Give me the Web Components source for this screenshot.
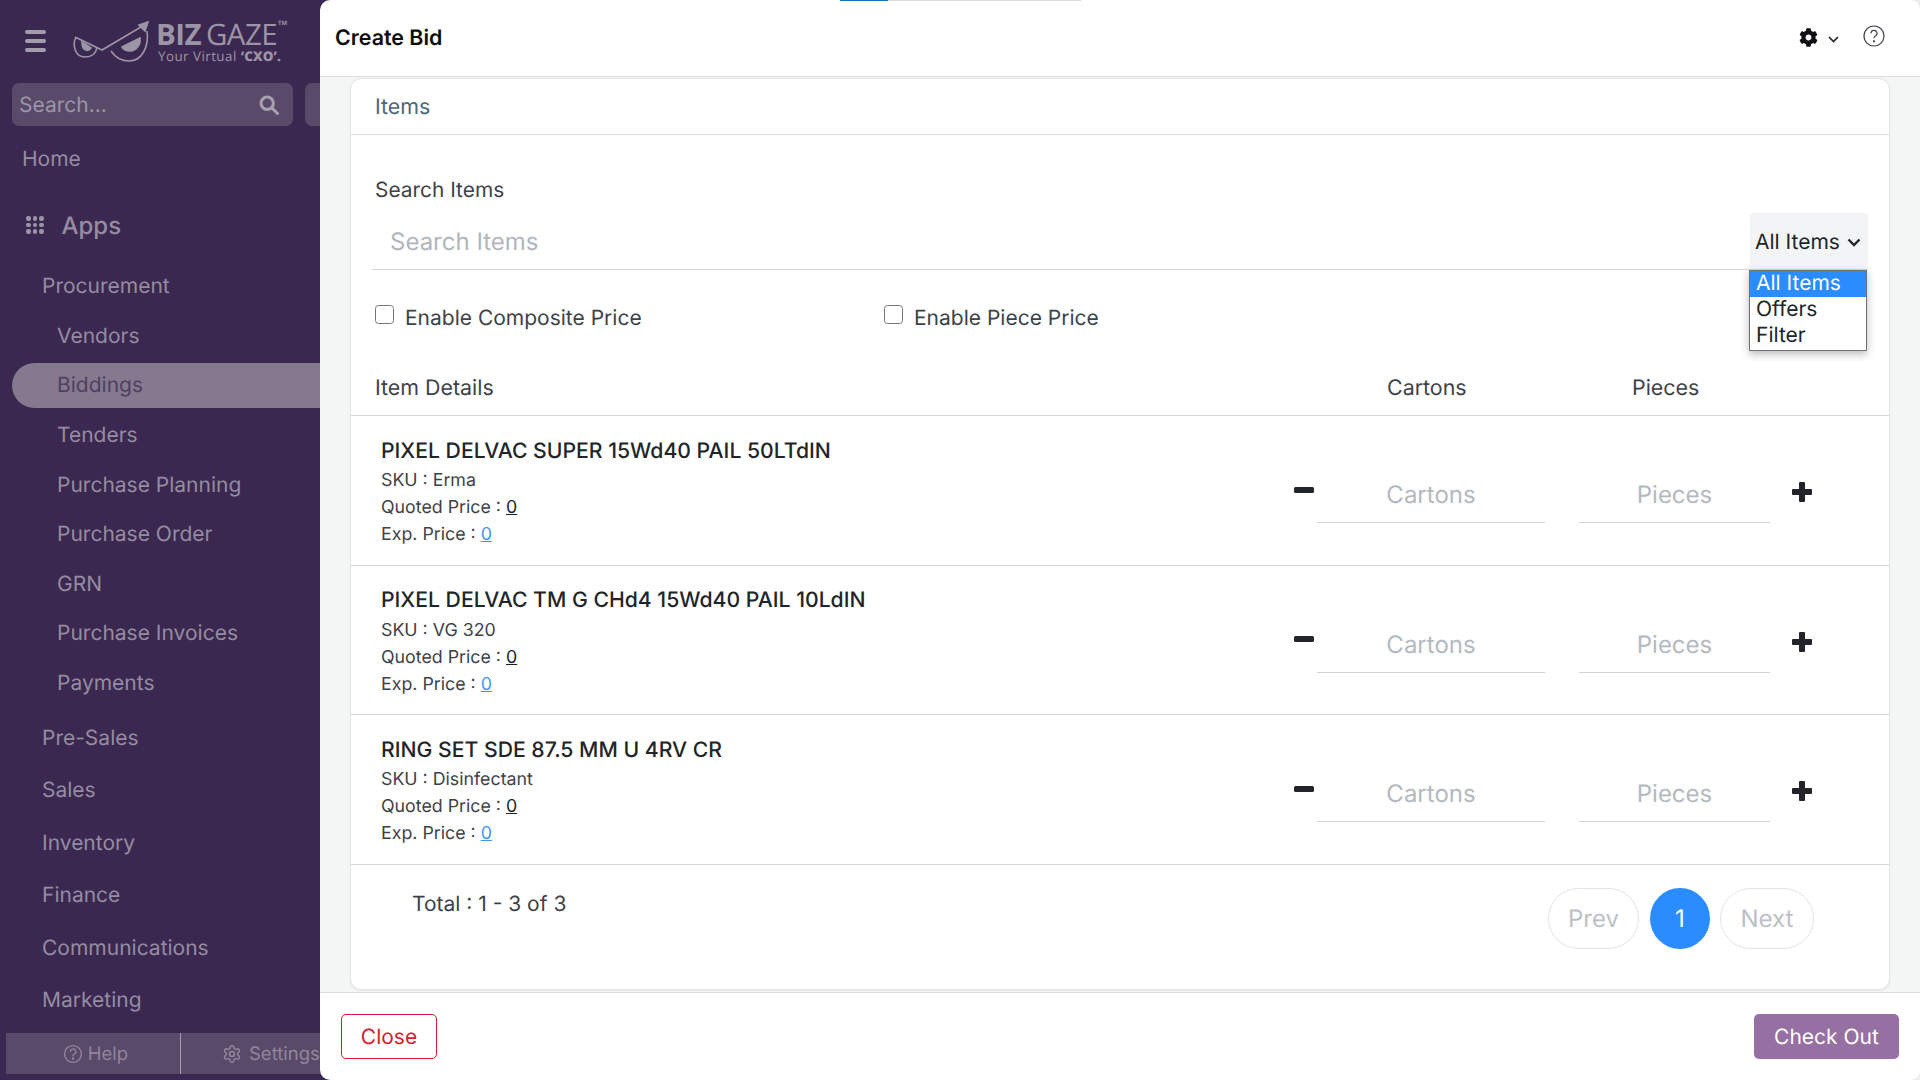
<!DOCTYPE html>
<html lang="en"><head><meta charset="utf-8"><title>Create Bid</title>
<style>
html,body{margin:0;padding:0;height:100%;}
body{width:1920px;height:1080px;overflow:hidden;font-family:Inter,"Liberation Sans",sans-serif;background:#3b2850;text-rendering:geometricPrecision;}
</style></head><body>
<app-shell><side-bar slot="side"></side-bar><bid-panel slot="main"></bid-panel></app-shell>
<script>
function el(name, html){
  customElements.define(name, class extends HTMLElement{
    constructor(){super();this.attachShadow({mode:'open'}).innerHTML=html(this);}
  });
}
const COG='M487.4 315.7l-42.6-24.6c4.3-23.2 4.3-47 0-70.2l42.6-24.6c4.9-2.8 7.1-8.6 5.5-14-11.1-35.6-30-67.8-54.7-94.6-3.8-4.1-10-5.1-14.8-2.3L380.8 110c-17.9-15.4-38.5-27.3-60.8-35.1V25.8c0-5.6-3.9-10.5-9.4-11.7-36.7-8.2-74.3-7.8-109.2 0-5.5 1.2-9.4 6.1-9.4 11.7V75c-22.2 7.9-42.8 19.8-60.8 35.1L88.7 85.5c-4.9-2.8-11-1.9-14.8 2.3-24.7 26.7-43.6 58.9-54.7 94.6-1.7 5.4.6 11.2 5.5 14L67.3 221c-4.3 23.2-4.3 47 0 70.2l-42.6 24.6c-4.9 2.8-7.1 8.6-5.5 14 11.1 35.6 30 67.8 54.7 94.6 3.8 4.1 10 5.1 14.8 2.3l42.6-24.6c17.9 15.4 38.5 27.3 60.8 35.1v49.2c0 5.6 3.9 10.5 9.4 11.7 36.7 8.2 74.3 7.8 109.2 0 5.5-1.2 9.4-6.1 9.4-11.7v-49.2c22.2-7.9 42.8-19.8 60.8-35.1l42.6 24.6c4.9 2.8 11 1.9 14.8-2.3 24.7-26.7 43.6-58.9 54.7-94.6 1.5-5.5-.7-11.3-5.6-14.1zM256 336c-44.1 0-80-35.9-80-80s35.9-80 80-80 80 35.9 80 80-35.9 80-80 80z';
const OUTLINE_GEAR='M12.22 2h-.44a2 2 0 0 0-2 2v.18a2 2 0 0 1-1 1.73l-.43.25a2 2 0 0 1-2 0l-.15-.08a2 2 0 0 0-2.73.73l-.22.38a2 2 0 0 0 .73 2.73l.15.1a2 2 0 0 1 1 1.72v.51a2 2 0 0 1-1 1.74l-.15.09a2 2 0 0 0-.73 2.73l.22.38a2 2 0 0 0 2.73.73l.15-.08a2 2 0 0 1 2 0l.43.25a2 2 0 0 1 1 1.73V20a2 2 0 0 0 2 2h.44a2 2 0 0 0 2-2v-.18a2 2 0 0 1 1-1.73l.43-.25a2 2 0 0 1 2 0l.15.08a2 2 0 0 0 2.73-.73l.22-.39a2 2 0 0 0-.73-2.73l-.15-.08a2 2 0 0 1-1-1.74v-.5a2 2 0 0 1 1-1.74l.15-.09a2 2 0 0 0 .73-2.73l-.22-.38a2 2 0 0 0-2.73-.73l-.15.08a2 2 0 0 1-2 0l-.43-.25a2 2 0 0 1-1-1.73V4a2 2 0 0 0-2-2z';

el('app-shell',()=>`<style>
:host{display:flex;width:1920px;height:1080px;background:#3b2850;overflow:hidden;}
.s{flex:0 0 320px;width:320px;height:1080px;overflow:hidden;}
.m{flex:1;min-width:0;height:1080px;background:linear-gradient(90deg,#3b2850 50%,#eceded 50%);}
</style><div class="s"><slot name="side"></slot></div><div class="m"><slot name="main"></slot></div>`);

el('brand-logo',()=>`<style>
:host{display:block;position:relative;width:214px;height:50px;margin-top:4px;color:#9c95a6;font-family:"Open Sans","Liberation Sans",sans-serif;}
svg{position:absolute;left:0;top:0;}
.b{position:absolute;left:84px;top:2px;font-size:29.5px;line-height:25px;height:25px;white-space:nowrap;letter-spacing:-.6px;}
.b b{font-weight:700;} .b span{font-weight:400;margin-left:5px;letter-spacing:-.5px;}
.tm{position:absolute;left:206px;top:1px;font-size:6px;font-weight:700;line-height:7px;}
.t{position:absolute;left:86px;top:29px;font-size:13.4px;line-height:17px;white-space:nowrap;letter-spacing:.45px;}
.t b{letter-spacing:.1px;font-weight:800;}
</style>
<svg width="80" height="44" viewBox="72 20 80 44" fill="none" stroke="#9c95a6" stroke-width="1.6">
  <path d="M75 38 L102 51 L146 25"/>
  <path d="M76 38 C72 46 75 58 85 58 C92 58 96 55 97 48"/>
  <path d="M139 26 L148 23 L145 32 Z" fill="#9c95a6"/>
  <path d="M147 32 C149 48 142 62 129 62 C121 62 115 58 111 52"/>
  <path d="M82 43 L91 49 C88 53 82 52 82 43Z" fill="#9c95a6"/>
  <path d="M122 48 L140 39 C141 47 135 52 130 52 C126 52 123 50 122 48Z" fill="#9c95a6"/>
</svg>
<div class="b"><b>BIZ</b><span>GAZE</span></div><div class="tm">TM</div>
<div class="t">Your Virtual <b>‘CXO’.</b></div>`);

el('search-box',()=>`<style>
:host{display:flex;gap:12px;width:320px;padding-left:12px;box-sizing:border-box;overflow:hidden;}
.b{flex:0 0 281px;height:43px;border-radius:7px;background:#594a69;display:flex;align-items:center;justify-content:space-between;padding:0 14px 0 7px;box-sizing:border-box;color:#9c95a6;font-size:21px;}
.b span{padding-top:1px;}
.x{flex:0 0 40px;height:43px;border-radius:7px;background:#594a69;}
</style><div class="b"><span>Search...</span>
<svg width="20" height="20" viewBox="0 0 20 20" fill="none" stroke="#a8a2b0" stroke-width="3"><circle cx="8.2" cy="8.2" r="6.2"/><path d="M13 13l5.5 5.5" stroke-linecap="round"/></svg>
</div><div class="x"></div>`);

el('nav-link',h=>{
 const lv=h.getAttribute('level');
 const pad={top:'22px',group:'42px',sub:'57px'}[lv];
 const ht=h.getAttribute('height')||(lv==='sub'?'49.5px':'52.5px');
 const act=h.hasAttribute('current');
 return `<style>
:host{display:block;height:${ht};}
div{height:100%;display:flex;align-items:center;padding:1px 0 0 ${pad};box-sizing:border-box;font-size:21px;color:${act?'#4f3f60':'#958ca1'};white-space:nowrap;}
.a{background:#85798f;border-radius:23px 0 0 23px;height:45px;margin:2px 0 0 12px;padding:0 0 0 45px;}
</style><div class="${act?'a':''}"><slot></slot></div>`});

el('help-bar',()=>`<style>
:host{display:flex;height:41px;margin-left:6px;color:#8f869b;font-size:18.5px;background:#594a69;overflow:hidden;}
div{display:flex;align-items:center;box-sizing:border-box;height:100%;white-space:nowrap;}
.h{flex:0 0 175px;justify-content:center;gap:5px;border-right:1px solid #a59db0;padding-left:5px;}
.g{padding-left:41px;gap:7px;}
</style><div class="h"><svg width="20" height="20" viewBox="0 0 20 20" fill="none" stroke="#8f869b" stroke-width="1.4"><circle cx="10" cy="10" r="8.4"/><path d="M7.4 7.8a2.7 2.7 0 1 1 3.9 2.4c-.9.5-1.3 1-1.3 2"/><circle cx="10" cy="14.6" r=".6" fill="#8f869b"/></svg>Help</div>
<div class="g"><svg width="20" height="20" viewBox="0 0 24 24" fill="none" stroke="#8f869b" stroke-width="1.8"><path d="${OUTLINE_GEAR}"/><circle cx="12" cy="12" r="3"/></svg>Settings</div>`);

el('side-bar',()=>`<style>
:host{display:flex;flex-direction:column;width:320px;height:1080px;color:#958ca1;}
.top{display:flex;align-items:center;height:83px;padding-left:25px;box-sizing:border-box;gap:26px;}
.burger{display:flex;flex-direction:column;gap:5px;width:21px;margin-top:-2px;}
.burger i{display:block;height:4px;border-radius:2px;background:#a39cad;}
.apps{display:flex;align-items:center;height:60px;padding-left:26px;gap:18px;font-size:24px;font-weight:500;color:#958ca1;margin-top:11px;}
.dots{display:grid;grid-template-columns:repeat(3,4.5px);gap:2px;}
.dots i{width:4.5px;height:4.5px;border-radius:50%;background:#9c95a6;}
.list{flex:1;margin-top:5px;}
.home{margin-top:8px;}
.pre{margin-top:4px;}
</style>
<div class="top"><div class="burger"><i></i><i></i><i></i></div><brand-logo></brand-logo></div>
<search-box></search-box>
<nav-link class="home" level="top" height="50px">Home</nav-link>
<div class="apps"><span class="dots"><i></i><i></i><i></i><i></i><i></i><i></i><i></i><i></i><i></i></span>Apps</div>
<div class="list">
<nav-link level="group" height="51px">Procurement</nav-link>
<nav-link level="sub">Vendors</nav-link>
<nav-link level="sub" current height="48px">Biddings</nav-link>
<nav-link level="sub">Tenders</nav-link>
<nav-link level="sub">Purchase Planning</nav-link>
<nav-link level="sub">Purchase Order</nav-link>
<nav-link level="sub">GRN</nav-link>
<nav-link level="sub">Purchase Invoices</nav-link>
<nav-link level="sub">Payments</nav-link>
<nav-link class="pre" level="group">Pre-Sales</nav-link>
<nav-link level="group">Sales</nav-link>
<nav-link level="group">Inventory</nav-link>
<nav-link level="group">Finance</nav-link>
<nav-link level="group">Communications</nav-link>
<nav-link level="group">Marketing</nav-link>
</div>
<help-bar></help-bar><div style="height:6px"></div>`);

el('qty-field',h=>`<style>
:host{display:flex;align-items:center;justify-content:center;height:59px;box-sizing:border-box;border-bottom:1.5px solid #d0d2d4;font-size:24px;color:#b4b9bf;padding-top:3px;}
</style><slot></slot>`);

el('item-row',h=>{
 const q=k=>h.getAttribute(k);
 return `<style>
:host{display:flex;height:149.5px;box-sizing:border-box;border-top:1.5px solid #d4d5d7;padding-left:30px;color:#212529;}
.i{flex:1;padding-top:21.500px;font-size:17.8px;color:#3d4247;}
.t{font-size:21.2px;font-weight:500;color:#212529;line-height:26px;margin-bottom:3.500px;white-space:nowrap;}
.l{line-height:27px;height:27px;white-space:nowrap;}
u.k{color:#212529;} u.b{color:#3f97f0;}
.c{display:flex;align-items:flex-start;padding:48px 77px 0 0;}
.m{width:20px;height:6px;border-radius:1.5px;background:#212529;margin:22.5px 3px 0 0;}
.f{width:228px;margin-right:34px;} .p{width:191px;margin-right:22px;}
.pl{width:20px;height:20px;margin-top:18px;}
</style>
<div class="i"><div class="t">${q('name')}</div><div class="l">SKU : ${q('sku')}</div>
<div class="l">Quoted Price : <u class="k">0</u></div><div class="l">Exp. Price : <u class="b">0</u></div></div>
<div class="c"><div class="m"></div><qty-field class="f">Cartons</qty-field><qty-field class="p">Pieces</qty-field>
<svg class="pl" viewBox="0 0 20 20"><path d="M7 1a1 1 0 0 1 1-1h4a1 1 0 0 1 1 1v6h6a1 1 0 0 1 1 1v4a1 1 0 0 1-1 1h-6v6a1 1 0 0 1-1 1H8a1 1 0 0 1-1-1v-6H1a1 1 0 0 1-1-1V8a1 1 0 0 1 1-1h6z" fill="#212529"/></svg></div>`});

el('filter-select',()=>`<style>
:host{display:block;position:relative;width:118px;height:56px;background:#f3f4f6;font-size:21px;color:#212529;}
.v{display:flex;align-items:center;height:100%;padding:2px 0 0 5px;box-sizing:border-box;gap:7px;white-space:nowrap;}
.menu{position:absolute;left:-1px;top:57px;width:118px;box-sizing:border-box;background:#fff;border:1px solid #6f7378;box-shadow:0 3px 8px rgba(0,0,0,.28);padding-bottom:1px;z-index:3;line-height:26px;height:81px;}
.o{padding-left:6px;height:26px;}
.on{background:#2b8cff;color:#fff;}
</style><div class="v">All Items<svg width="14" height="9" viewBox="0 0 14 9" fill="none" stroke="#212529" stroke-width="2.4"><path d="M1.5 1.5l5.5 5.5 5.500-5.500"/></svg></div>
<div class="menu"><div class="o on">All Items</div><div class="o">Offers</div><div class="o">Filter</div></div>`);

el('pager-bar',()=>`<style>
:host{display:flex;height:102px;box-sizing:border-box;border-top:1.5px solid #d4d5d7;padding:23px 75px 0 61px;font-size:21px;color:#3d4247;align-items:flex-start;}
.t{flex:1;line-height:30px;margin-top:2px;}
.b{height:61px;border:1px solid #e2e3e5;border-radius:31px;box-sizing:border-box;display:flex;align-items:center;justify-content:center;color:#bcc0c6;font-size:24px;}
.prev{width:91px;} .next{width:94px;}
.cur{width:60px;height:61px;border-radius:50%;background:#2b8cff;color:#fff;display:flex;align-items:center;justify-content:center;font-size:24px;margin:0 10px 0 11px;}
</style><div class="t">Total : 1 - 3 of 3</div><div class="b prev">Prev</div><div class="cur">1</div><div class="b next">Next</div>`);

el('check-opt',()=>`<style>
:host{display:flex;align-items:center;gap:11px;font-size:21px;color:#3d4247;white-space:nowrap;}
i{display:block;width:19px;height:19px;box-sizing:border-box;border:1.5px solid #767676;border-radius:3.5px;background:#fff;margin-top:-8px;}
</style><i></i><slot></slot>`);

el('items-card',()=>`<style>
:host{display:block;width:1540px;height:912px;box-sizing:border-box;background:#fff;border:1px solid #e3e4e6;border-radius:11px;box-shadow:0 1px 2px rgba(0,0,0,.06);}
.h{height:56px;box-sizing:border-box;border-bottom:1.5px solid #dedfe1;padding:0 0 0 24px;display:flex;align-items:center;font-size:21.4px;color:#4f6773;}
.lb{padding:43px 0 0 24px;font-size:20.9px;color:#3d4247;line-height:26px;height:26px;}
.s{display:flex;margin:9px 21px 0 21px;height:56px;border-bottom:1.5px solid #d4d5d7;box-sizing:content-box;}
.s .ph{flex:1;padding:0 0 0 18px;display:flex;align-items:center;font-size:24px;color:#b1b6bc;}
.chk{display:flex;padding:33px 0 0 24px;height:30px;}
.chk check-opt:first-child{width:509px;}
.hd{display:flex;height:82px;box-sizing:border-box;padding:42px 0 0 24px;font-size:21.4px;color:#3d4247;line-height:26px;}
.hd .a{flex:1}.hd .b{width:245px;}.hd .c{width:257px;}
</style>
<div class="h">Items</div>
<div class="lb">Search Items</div>
<div class="s"><div class="ph">Search Items</div><filter-select></filter-select></div>
<div class="chk"><check-opt>Enable Composite Price</check-opt><check-opt>Enable Piece Price</check-opt></div>
<div class="hd"><div class="a">Item Details</div><div class="b">Cartons</div><div class="c">Pieces</div></div>
<item-row name="PIXEL DELVAC SUPER 15Wd40 PAIL 50LTdIN" sku="Erma"></item-row>
<item-row name="PIXEL DELVAC TM G CHd4 15Wd40 PAIL 10LdIN" sku="VG 320"></item-row>
<item-row name="RING SET SDE 87.5 MM U 4RV CR" sku="Disinfectant"></item-row>
<pager-bar></pager-bar>`);

el('bid-panel',()=>`<style>
:host{display:flex;flex-direction:column;position:relative;height:1080px;background:#fff;border-radius:10px;overflow:hidden;}
.tab{position:absolute;left:520px;top:0;height:1px;width:241px;display:flex;}
.tab i:first-child{width:48px;background:#1b6fb8;} .tab i:last-child{flex:1;background:#dcdde0;}
header{display:flex;align-items:center;height:77px;box-sizing:border-box;border-bottom:1.5px solid #dcdde0;padding:0 35px 1px 15px;}
h1{flex:1;margin:0;font-size:21.4px;font-weight:600;color:#0c0d0e;}
.ch{margin:4px 24px 0 10px;}
main{flex:1;min-height:0;background:#f4f5f5;padding:1px 0 0 30px;}
footer{height:88px;box-sizing:border-box;border-top:1.5px solid #dcdde0;display:flex;justify-content:space-between;padding:21px 21px 0 21px;}
.btn{height:45px;box-sizing:border-box;border-radius:5px;display:flex;align-items:center;justify-content:center;font-size:21px;padding-top:1px;}
.close{width:96px;border:1.5px solid #d4202a;color:#d4202a;}
.go{width:145px;background:#966fa3;color:#fff;}
</style>
<div class="tab"><i></i><i></i></div>
<header><h1>Create Bid</h1>
<svg width="19" height="19" viewBox="0 0 512 512"><path fill="#0f1012" d="${COG}"/></svg>
<svg class="ch" width="11" height="7" viewBox="0 0 11 7" fill="none" stroke="#212529" stroke-width="1.7"><path d="M1 1l4.500 4.500L10 1"/></svg>
<svg width="22" height="22" viewBox="0 0 22 22" fill="none" stroke="#3d4247" stroke-width="1.2" style="margin-top:-3px"><circle cx="11" cy="11" r="10"/><path d="M8 8.300a3 3 0 1 1 4.400 2.700c-1 .6-1.400 1.100-1.400 2.300"/><circle cx="11" cy="16.300" r=".5" fill="#3d4247"/></svg>
</header>
<main><items-card></items-card></main>
<footer><div class="btn close">Close</div><div class="btn go">Check Out</div></footer>`);
</script>
</body></html>
